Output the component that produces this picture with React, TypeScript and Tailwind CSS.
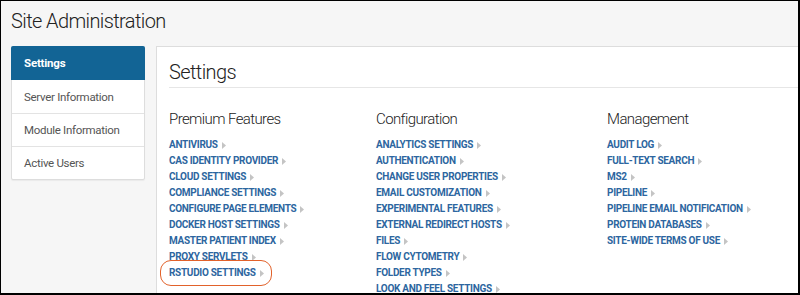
import React from "react";

const premium = [
  "ANTIVIRUS",
  "CAS IDENTITY PROVIDER",
  "CLOUD SETTINGS",
  "COMPLIANCE SETTINGS",
  "CONFIGURE PAGE ELEMENTS",
  "DOCKER HOST SETTINGS",
  "MASTER PATIENT INDEX",
  "PROXY SERVLETS",
  "RSTUDIO SETTINGS",
];
const config = [
  "ANALYTICS SETTINGS",
  "AUTHENTICATION",
  "CHANGE USER PROPERTIES",
  "EMAIL CUSTOMIZATION",
  "EXPERIMENTAL FEATURES",
  "EXTERNAL REDIRECT HOSTS",
  "FILES",
  "FLOW CYTOMETRY",
  "FOLDER TYPES",
  "LOOK AND FEEL SETTINGS",
];
const mgmt = [
  "AUDIT LOG",
  "FULL-TEXT SEARCH",
  "MS2",
  "PIPELINE",
  "PIPELINE EMAIL NOTIFICATION",
  "PROTEIN DATABASES",
  "SITE-WIDE TERMS OF USE",
];

function Arrow() {
  return (
    <svg width="4" height="7" viewBox="0 0 4 7" className="ml-[4px] shrink-0">
      <path d="M0 0 L4 3.5 L0 7 Z" fill="#c4c4c4" />
    </svg>
  );
}

function LinkRow({ text }: { text: string }) {
  return (
    <div className="flex items-center h-[16px]">
      <span className="text-[10px] font-bold text-[#2d66a0] tracking-[-0.3px] leading-[16px]">{text}</span>
      <Arrow />
    </div>
  );
}

function Column({ title, items, width, highlight }: { title: string; items: string[]; width: string; highlight?: boolean }) {
  return (
    <div className={`${width} shrink-0 relative`}>
      <div className="text-[15px] font-light text-[#222] leading-[20px] mb-[8px] tracking-[-0.6px]">{title}</div>
      <div className="flex flex-col">
        {items.map((t) => (
          <LinkRow key={t} text={t} />
        ))}
      </div>
      {highlight && (
        <div className="absolute left-[-9px] top-[151px] w-[112px] h-[26px] rounded-[11px] border-[1.5px] border-[#e2622b]" />
      )}
    </div>
  );
}

export default function App() {
  const items = ["Server Information", "Module Information", "Active Users"];
  return (
    <div
      className="w-[800px] h-[295px] overflow-hidden bg-[#f6f6f6] border-l border-t border-r-2 border-b-2 border-black"
      style={{ fontFamily: "Roboto, 'Liberation Sans', sans-serif" }}
    >
      <div className="pl-[10px] pt-[7px] h-[45px] text-[20px] font-light text-[#222] leading-[26px] tracking-[-0.6px]">
        Site Administration
      </div>
      <div className="flex pl-[10px] gap-[11px]">
        <div className="w-[134px] shrink-0 self-start bg-white border border-[#dddddd] rounded-[2px] shadow-[0_1px_1px_rgba(0,0,0,0.05)]">
          <div className="h-[34px] pt-[2px] bg-[#126495] text-white text-[11.5px] font-bold flex items-center pl-[13px] -mt-px -mx-px rounded-t-[2px] tracking-[-0.2px]">
            Settings
          </div>
          {items.map((t, i) => (
            <div
              key={t}
              className={`h-[33px] pt-[2px] flex items-center pl-[12px] text-[11.5px] text-[#555] tracking-[-0.3px] ${i > 0 ? "border-t border-[#e3e3e3]" : ""}`}
            >
              {t}
            </div>
          ))}
        </div>
        <div className="w-[700px] shrink-0 h-[260px] bg-white border border-[#dddddd] pl-[12px]">
          <div className="h-[41px] pt-[12px] text-[20px] font-light text-[#222] leading-[26px] border-b border-[#e6e6e6] tracking-[-0.6px]">
            Settings
          </div>
          <div className="flex pt-[21px]">
            <Column title="Premium Features" items={premium} width="w-[207px]" highlight />
            <Column title="Configuration" items={config} width="w-[231px]" />
            <Column title="Management" items={mgmt} width="w-[200px]" />
          </div>
        </div>
      </div>
    </div>
  );
}
